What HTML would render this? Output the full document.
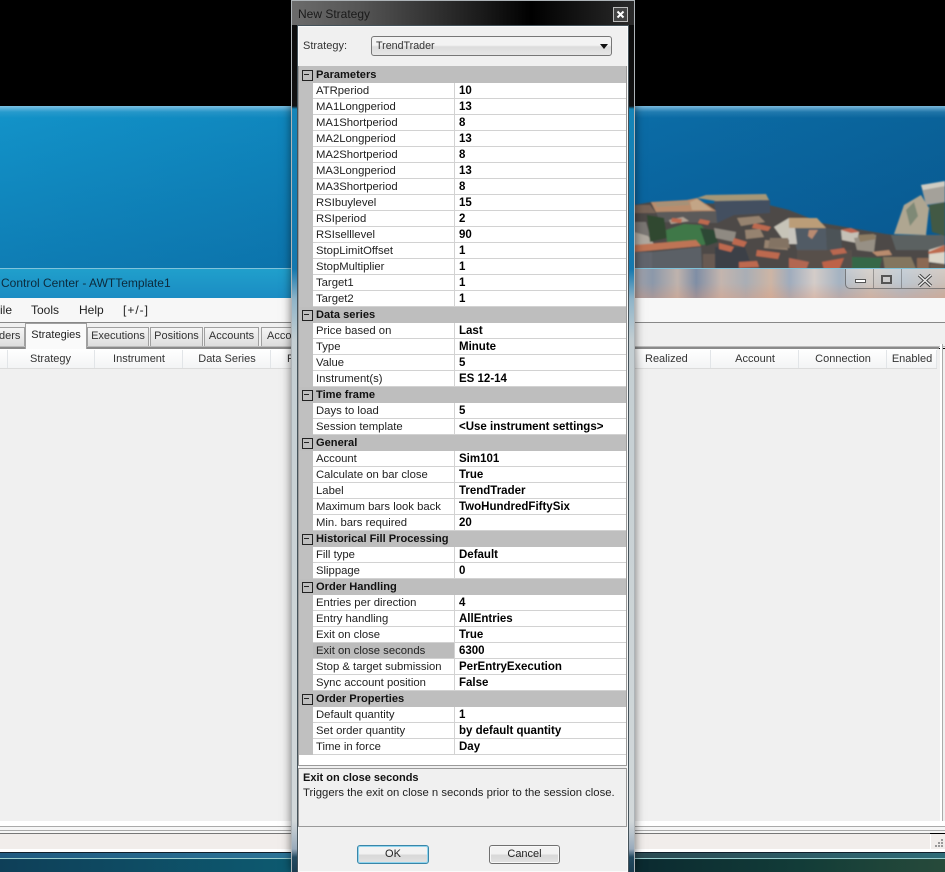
<!DOCTYPE html>
<html><head><meta charset="utf-8"><title>New Strategy</title>
<style>
*{box-sizing:border-box}
html,body{margin:0;padding:0;background:#000;overflow:hidden;width:945px;height:872px}
body{position:relative;font:11.3px/16px "Liberation Sans",sans-serif;color:#111}
.a{position:absolute}
.t{position:absolute;white-space:nowrap}
.tab{position:absolute;top:327px;height:20px;background:linear-gradient(#f5f5f5,#dcdcdc);border:1px solid #a0a0a0;border-bottom:0;text-align:center;line-height:17px;color:#333;font-size:11px}
.hc{position:absolute;top:350px;height:19px;line-height:19px;text-align:center;color:#333;white-space:nowrap;font-size:11px}
.vl{position:absolute;top:350px;height:18px;width:1px;background:#e2e5e8}
#grid{position:absolute;left:299px;top:66px;width:327px;height:700px;background:#fff}
.r{height:16px;position:relative;white-space:nowrap;overflow:hidden;background:linear-gradient(90deg,#c0c0c0 14px,#fff 14px)}
.r:after{content:"";position:absolute;left:14px;right:0;bottom:0;height:1px;background:#d2d2d2}
.r:before{content:"";position:absolute;left:155px;top:0;bottom:0;width:1px;background:#d2d2d2}
.r i{position:absolute;left:17px;top:0;font-style:normal;color:#222;line-height:16px}
.r b{position:absolute;left:160px;top:0;color:#000;line-height:16px;font-size:11.5px}
.h{height:16px;position:relative;background:#bebebe;font-weight:bold;font-size:11.1px;line-height:16px;padding-left:17px;color:#111}
.h:before{content:"";position:absolute;left:3px;top:3px;width:9px;height:9px;border:1px solid #222}
.h:after{content:"";position:absolute;left:5px;top:7px;width:5px;height:1px;background:#222}
.sel{background:linear-gradient(90deg,#c0c0c0 14px,#bcbcbc 14px,#bcbcbc 155px,#fff 155px)}
.btn{position:absolute;top:845px;height:19px;border-radius:3px;text-align:center;line-height:17px;color:#222;font-size:11px;background:linear-gradient(#f2f2f2 45%,#d8d8d8 55%,#e2e2e2)}
.m{position:absolute;top:302px;color:#222;font-size:12px;white-space:nowrap}
</style></head><body>

<!-- desktop wallpaper -->
<div class="a" style="left:0;top:106px;width:945px;height:163px;background:linear-gradient(90deg,#1292c8 0,#0f86bd 290px,#0b6ca6 640px,#0a6299 945px)"></div>
<div class="a" style="left:0;top:106px;width:945px;height:163px;background:linear-gradient(rgba(150,205,235,.8) 0,rgba(120,190,225,.2) 6px,rgba(0,0,0,0) 12px,rgba(0,40,100,.2) 100%)"></div>

<svg class="a" style="left:634px;top:170px" width="311" height="100" viewBox="634 170 311 100">
<defs><filter id="b" x="-5%" y="-5%" width="110%" height="110%"><feGaussianBlur stdDeviation=".9"/><feColorMatrix type="saturate" values=".82"/></filter></defs>
<g filter="url(#b)">
<path d="M634 205L651 202 769 205 789 210 822 223 886 234 945 240V272H634Z" fill="#4e4a46"/>
<path d="M891 235L929 235 945 235V250H896Z" fill="#5a6262"/>
<path d="M894 234L904 205 921 195 929 208 926 235Z" fill="#b0a68c"/>
<path d="M906 210l8-8 4 14-8 10z" fill="#7d8a72"/>
<path d="M929 205L945 202V236L932 232Z" fill="#3e5a40"/>
<path d="M921 185L945 182V202L926 205Z" fill="#a4a198"/>
<path d="M921 185L945 181V186L923 190Z" fill="#d0ccc0"/>
<path d="M714 201L770 200 770 213 734 215 717 223Z" fill="#3f5064"/>
<path d="M697 198L706 195 766 194 769 200 716 201Z" fill="#a8966e"/>
<path d="M651 202L687 200 697 198 716 211 656 212Z" fill="#c08a60"/>
<path d="M655 203L688 201 690 205 657 207Z" fill="#aa9070"/>
<path d="M690 202L697 199 712 210 692 210Z" fill="#c8a47c"/>
<path d="M656 212L716 211 717 223 660 222Z" fill="#5b5a5a"/>
<path d="M634 205h16l6 8H634Z" fill="#7a6252"/>
<path d="M634 222h12l6 20-18 2Z" fill="#7a7672"/>
<path d="M634 232l14 4 6 8-20 1Z" fill="#b0a89c"/>
<path d="M647 215L664 218 667 238 650 242Z" fill="#2a4a2a"/>
<path d="M666 230L684 224 701 225 712 238 704 245 667 242Z" fill="#2e7a3c"/>
<path d="M700 228l14 2 4 12-12 4z" fill="#254a30"/>
<path d="M714 228L736 232 734 242 716 238Z" fill="#908a80"/>
<path d="M669 220l14-3 6 4-18 3z" fill="#b0a090"/>
<path d="M634 245L696 240 701 246 634 252Z" fill="#c87044"/>
<path d="M652 252L701 247 702 270 652 270Z" fill="#5a6068"/>
<path d="M634 252h18v18h-18z" fill="#60656e"/>
<path d="M703 254h12v16h-12z" fill="#6b5a50"/>
<path d="M715 247h30l8 23h-38z" fill="#3a4048"/>
<path d="M719 243l15 4-3 5-12-3zM734 238l13 4-3 5-12-3zM754 223l17 4-3 4-16-3zM757 250l23 3-2 6-22-3zM739 262l18-1 2 6-20 1zM700 219l10 2-2 4-10-2zM672 218l10 1-1 4-10-1z" fill="#c8643e"/>
<path d="M737 218l22-2 6 6-24 4zM745 230l15-1 4 8-18 2zM765 240l20 2 3 8-24-2z" fill="#9a826a"/>
<path d="M774 227L789 218 791 228 789 240 782 238Z" fill="#c8c4b6"/>
<path d="M770 238h18l2 10h-22z" fill="#85725e"/>
<path d="M789 218L817 218 826 228 789 228Z" fill="#c09c6c"/>
<path d="M791 228L826 228 827 250 797 250Z" fill="#4f5c68"/>
<path d="M789 228h6l2 16h-8z" fill="#c8c4bc"/>
<path d="M809 230l9 0-6 9-4-3z" fill="#c08868"/>
<path d="M826 228l15 2 1 20-15 0z" fill="#4c5258"/>
<path d="M841 230L851 228 859 232 857 243 842 240Z" fill="#c6c0b4"/>
<path d="M841 230L851 228 859 232 851 233Z" fill="#c85c3c"/>
<path d="M854 238L876 235 874 252 857 250Z" fill="#989082"/>
<path d="M858 235l16-1 2 5-16 3z" fill="#8f7c5c"/>
<path d="M797 250h55v20h-55z" fill="#5c5048" opacity=".8"/>
<path d="M830 250l14-2 3 5-14 2z" fill="#c46240"/>
<path d="M822 262L844 258 839 270 824 270Z" fill="#c85c34"/>
<path d="M789 258L809 262 806 270 789 268Z" fill="#bc6244"/>
<path d="M852 257L882 258 879 271 852 271Z" fill="#276b42"/>
<path d="M872 252L889 250 892 255 877 256Z" fill="#c08a64"/>
<path d="M883 257h28l6 14h-32z" fill="#857658"/>
<path d="M917 258h12v13h-12z" fill="#90684c"/>
<path d="M929 250L945 245V264L929 262Z" fill="#dcd6c6"/>
<path d="M928 252L945 245V252L929 254Z" fill="#c8663e"/>
<path d="M930 264h15v7h-15z" fill="#6a5a4a"/>
</g></svg>

<div class="a" style="left:0;top:0;width:945px;height:106px;background:#000"></div>

<!-- main window title bar -->
<div class="a" style="left:0;top:268px;width:945px;height:30px;background:linear-gradient(#20a0cc,#1b8cc3)"></div>
<div class="a" style="left:0;top:268px;width:945px;height:1px;background:#9cd;opacity:.8"></div>
<div class="a" style="left:634px;top:269px;width:311px;height:29px;background:linear-gradient(90deg,#a8a6ac 0,#8b98aa 6%,#bfb3ad 14%,#7f8ea5 20%,#c4b5ae 28%,#a9aeb5 36%,#cdb5a5 44%,#9facbd 50%,#d4ccc8 58%,#a5b3c2 66%,#c7bfb8 76%,#b0bcc7 86%,#c3b6ad 100%)"></div>
<div class="a" style="left:634px;top:283px;width:311px;height:15px;background:linear-gradient(rgba(220,130,100,.0),rgba(220,150,120,.35))"></div>
<div class="t" style="left:1px;top:275px;font-size:12px;color:#0c2a3c">Control Center - AWTTemplate1</div>

<!-- caption buttons -->
<div class="a" style="left:845px;top:269px;width:100px;height:20px;background:linear-gradient(rgba(255,255,255,.3),rgba(255,255,255,.1));border:1px solid rgba(70,70,70,.6);border-top:0;border-right:0;border-radius:0 0 0 5px"></div>
<div class="a" style="left:873px;top:269px;width:1px;height:19px;background:rgba(80,80,80,.45)"></div>
<div class="a" style="left:901px;top:269px;width:1px;height:19px;background:rgba(80,80,80,.45)"></div>
<div class="a" style="left:855px;top:279px;width:11px;height:4px;background:#fff;border:1px solid #555"></div>
<div class="a" style="left:881px;top:275px;width:11px;height:9px;background:#ccc;border:2px solid #555"></div>
<svg class="a" style="left:917px;top:274px" width="16" height="13"><path d="M2 1L14 12M14 1L2 12" stroke="#444" stroke-width="3.4"/><path d="M2 1L14 12M14 1L2 12" stroke="#eee" stroke-width="1.4"/></svg>

<!-- main window body -->
<div class="a" style="left:0;top:298px;width:945px;height:25px;background:#f7f7f7"></div>
<div class="a" style="left:0;top:322px;width:945px;height:1px;background:#888"></div>
<div class="a" style="left:0;top:323px;width:945px;height:25px;background:#f0f0f0"></div>
<div class="m" style="left:0">ile</div>
<div class="m" style="left:31px">Tools</div>
<div class="m" style="left:79px">Help</div>
<div class="m" style="left:123px;letter-spacing:1px">[+/-]</div>

<div class="tab" style="left:-2px;width:27px;text-align:right;padding-right:4px">ders</div>
<div class="tab" style="left:87px;width:62px">Executions</div>
<div class="tab" style="left:150px;width:53px">Positions</div>
<div class="tab" style="left:204px;width:55px">Accounts</div>
<div class="tab" style="left:261px;width:34px;text-align:left;padding-left:5px;overflow:hidden">Accounts</div>
<div class="a" style="left:0;top:346px;width:945px;height:1px;background:#bbb"></div>
<div class="a" style="left:0;top:347px;width:939px;height:2px;background:#8a8a8a"></div>
<div class="a" style="left:25px;top:323px;width:62px;height:26px;background:#fafafa;border:1px solid #a0a0a0;border-bottom:0;text-align:center;line-height:22px;color:#222;font-size:11px">Strategies</div>

<div class="a" style="left:0;top:349px;width:945px;height:472px;background:#f0f0f0"></div>
<div class="a" style="left:0;top:349px;width:937px;height:19px;background:linear-gradient(#fff,#f3f4f5)"></div>
<div class="a" style="left:0;top:368px;width:937px;height:1px;background:#dcdcdc"></div>
<div class="vl" style="left:7px"></div><div class="vl" style="left:94px"></div><div class="vl" style="left:182px"></div><div class="vl" style="left:270px"></div>
<div class="vl" style="left:710px"></div><div class="vl" style="left:798px"></div><div class="vl" style="left:886px"></div><div class="vl" style="left:936px"></div>
<div class="hc" style="left:7px;width:87px">Strategy</div>
<div class="hc" style="left:94px;width:90px">Instrument</div>
<div class="hc" style="left:182px;width:90px">Data Series</div>
<div class="hc" style="left:287px;width:5px;overflow:hidden;text-align:left">P</div>
<div class="hc" style="left:645px">Realized</div>
<div class="hc" style="left:710px;width:90px">Account</div>
<div class="hc" style="left:798px;width:90px">Connection</div>
<div class="hc" style="left:886px;width:52px">Enabled</div>
<div class="a" style="left:940px;top:344px;width:3px;height:482px;background:#fff;border-right:1px solid #aaa"></div>

<!-- bottom of main window -->
<div class="a" style="left:0;top:821px;width:945px;height:5px;background:#fff"></div>
<div class="a" style="left:0;top:826px;width:945px;height:1px;background:#aaa"></div>
<div class="a" style="left:0;top:827px;width:945px;height:3px;background:#f6f6f6"></div>
<div class="a" style="left:0;top:830px;width:945px;height:1px;background:#aaa"></div>
<div class="a" style="left:0;top:831px;width:945px;height:2px;background:#f6f6f6"></div>
<div class="a" style="left:0;top:833px;width:930px;height:1px;background:#777"></div>
<div class="a" style="left:0;top:834px;width:945px;height:15px;background:#f1edeb"></div>
<div class="a" style="left:930px;top:834px;width:1px;height:15px;background:#fff"></div>
<svg class="a" style="left:933px;top:838px" width="11" height="11"><path d="M8 1h2v2H8zM5 4h2v2H5zM8 4h2v2H8zM2 7h2v2H2zM5 7h2v2H5zM8 7h2v2H8z" fill="#999"/></svg>
<div class="a" style="left:0;top:849px;width:945px;height:3px;background:#fff"></div>
<div class="a" style="left:0;top:852px;width:945px;height:1px;background:#10202c"></div>
<div class="a" style="left:0;top:853px;width:945px;height:5px;background:linear-gradient(90deg,#1f5a80,#2c7497 291px,#2a4a52 640px,#2f6c78 945px)"></div>
<div class="a" style="left:0;top:858px;width:945px;height:1px;background:#9cc"></div>
<div class="a" style="left:0;top:859px;width:945px;height:13px;background:linear-gradient(90deg,#0e3f58,#0d5a70 291px,#0b2a30 634px,#123c38 800px,#274a3a 945px)"></div>

<!-- dialog frame -->
<div class="a" style="left:291px;top:0;width:344px;height:872px;background:linear-gradient(#0a0a0a 0,#111 105px,#1585b8 108px,#1478ae 268px,#8fb4c8 298px,#c4ced2 340px,#d2d8da 820px,#9ab 848px,#234a60 856px,#1a3c50 872px);border:1px solid #aeb4b8;border-bottom:0;box-shadow:0 0 9px rgba(0,0,0,.55)"></div>
<div class="a" style="left:292px;top:1px;width:342px;height:24px;background:linear-gradient(90deg,#6b6b6b 0,#555 20%,#1b1b1b 55%,#000 70%,#2a2a2a 100%)"></div>
<div class="t" style="left:298px;top:6px;font-size:12px;color:#1a1a1a">New Strategy</div>
<div class="a" style="left:613px;top:7px;width:15px;height:15px;background:#444;border:1px solid #bbb"></div>
<svg class="a" style="left:616px;top:10px" width="9" height="9"><path d="M1.5 1.5L7.5 7.5M7.5 1.5L1.5 7.5" stroke="#fff" stroke-width="2"/></svg>

<div class="a" style="left:297px;top:25px;width:332px;height:847px;background:#f0f0f0;border:1px solid #44525a;border-bottom:0;box-shadow:inset 0 0 0 1px #fafafa"></div>

<div class="t" style="left:303px;top:38px;color:#333;font-size:11px">Strategy:</div>
<div class="a" style="left:371px;top:36px;width:241px;height:20px;border:1px solid #777;border-radius:3px;background:linear-gradient(#f3f3f3 45%,#dcdcdc 55%,#e6e6e6);line-height:18px;padding-left:4px;color:#333;font-size:10.7px">TrendTrader</div>
<div class="a" style="left:600px;top:44px;width:0;height:0;border-left:4px solid transparent;border-right:4px solid transparent;border-top:5px solid #111"></div>

<!-- property grid -->
<div id="grid">
<div style="height:1px;background:#bebebe"></div>
<div class="h">Parameters</div>
<div class="r"><i>ATRperiod</i><b>10</b></div>
<div class="r"><i>MA1Longperiod</i><b>13</b></div>
<div class="r"><i>MA1Shortperiod</i><b>8</b></div>
<div class="r"><i>MA2Longperiod</i><b>13</b></div>
<div class="r"><i>MA2Shortperiod</i><b>8</b></div>
<div class="r"><i>MA3Longperiod</i><b>13</b></div>
<div class="r"><i>MA3Shortperiod</i><b>8</b></div>
<div class="r"><i>RSIbuylevel</i><b>15</b></div>
<div class="r"><i>RSIperiod</i><b>2</b></div>
<div class="r"><i>RSIselllevel</i><b>90</b></div>
<div class="r"><i>StopLimitOffset</i><b>1</b></div>
<div class="r"><i>StopMultiplier</i><b>1</b></div>
<div class="r"><i>Target1</i><b>1</b></div>
<div class="r"><i>Target2</i><b>1</b></div>
<div class="h">Data series</div>
<div class="r"><i>Price based on</i><b>Last</b></div>
<div class="r"><i>Type</i><b>Minute</b></div>
<div class="r"><i>Value</i><b>5</b></div>
<div class="r"><i>Instrument(s)</i><b>ES 12-14</b></div>
<div class="h">Time frame</div>
<div class="r"><i>Days to load</i><b>5</b></div>
<div class="r"><i>Session template</i><b>&lt;Use instrument settings&gt;</b></div>
<div class="h">General</div>
<div class="r"><i>Account</i><b>Sim101</b></div>
<div class="r"><i>Calculate on bar close</i><b>True</b></div>
<div class="r"><i>Label</i><b>TrendTrader</b></div>
<div class="r"><i>Maximum bars look back</i><b>TwoHundredFiftySix</b></div>
<div class="r"><i>Min. bars required</i><b>20</b></div>
<div class="h">Historical Fill Processing</div>
<div class="r"><i>Fill type</i><b>Default</b></div>
<div class="r"><i>Slippage</i><b>0</b></div>
<div class="h">Order Handling</div>
<div class="r"><i>Entries per direction</i><b>4</b></div>
<div class="r"><i>Entry handling</i><b>AllEntries</b></div>
<div class="r"><i>Exit on close</i><b>True</b></div>
<div class="r sel"><i>Exit on close seconds</i><b>6300</b></div>
<div class="r"><i>Stop &amp; target submission</i><b>PerEntryExecution</b></div>
<div class="r"><i>Sync account position</i><b>False</b></div>
<div class="h">Order Properties</div>
<div class="r"><i>Default quantity</i><b>1</b></div>
<div class="r"><i>Set order quantity</i><b>by default quantity</b></div>
<div class="r"><i>Time in force</i><b>Day</b></div>
</div>
<div class="a" style="left:298px;top:66px;width:329px;height:700px;border:1px solid #9a9a9a;border-top:0"></div>

<!-- description -->
<div class="a" style="left:298px;top:768px;width:329px;height:59px;border:1px solid #9a9a9a;background:#f0f0f0"></div>
<div class="t" style="left:303px;top:770px;font-weight:bold;font-size:11px;color:#111">Exit on close seconds</div>
<div class="t" style="left:303px;top:785px;color:#222">Triggers the exit on close n seconds prior to the session close.</div>

<div class="btn" style="left:357px;width:72px;border:1px solid #3a86a8;box-shadow:inset 0 0 0 1px #8fd4ee">OK</div>
<div class="btn" style="left:489px;width:71px;border:1px solid #707070;box-shadow:inset 0 0 0 1px #f8f8f8">Cancel</div>

</body></html>
